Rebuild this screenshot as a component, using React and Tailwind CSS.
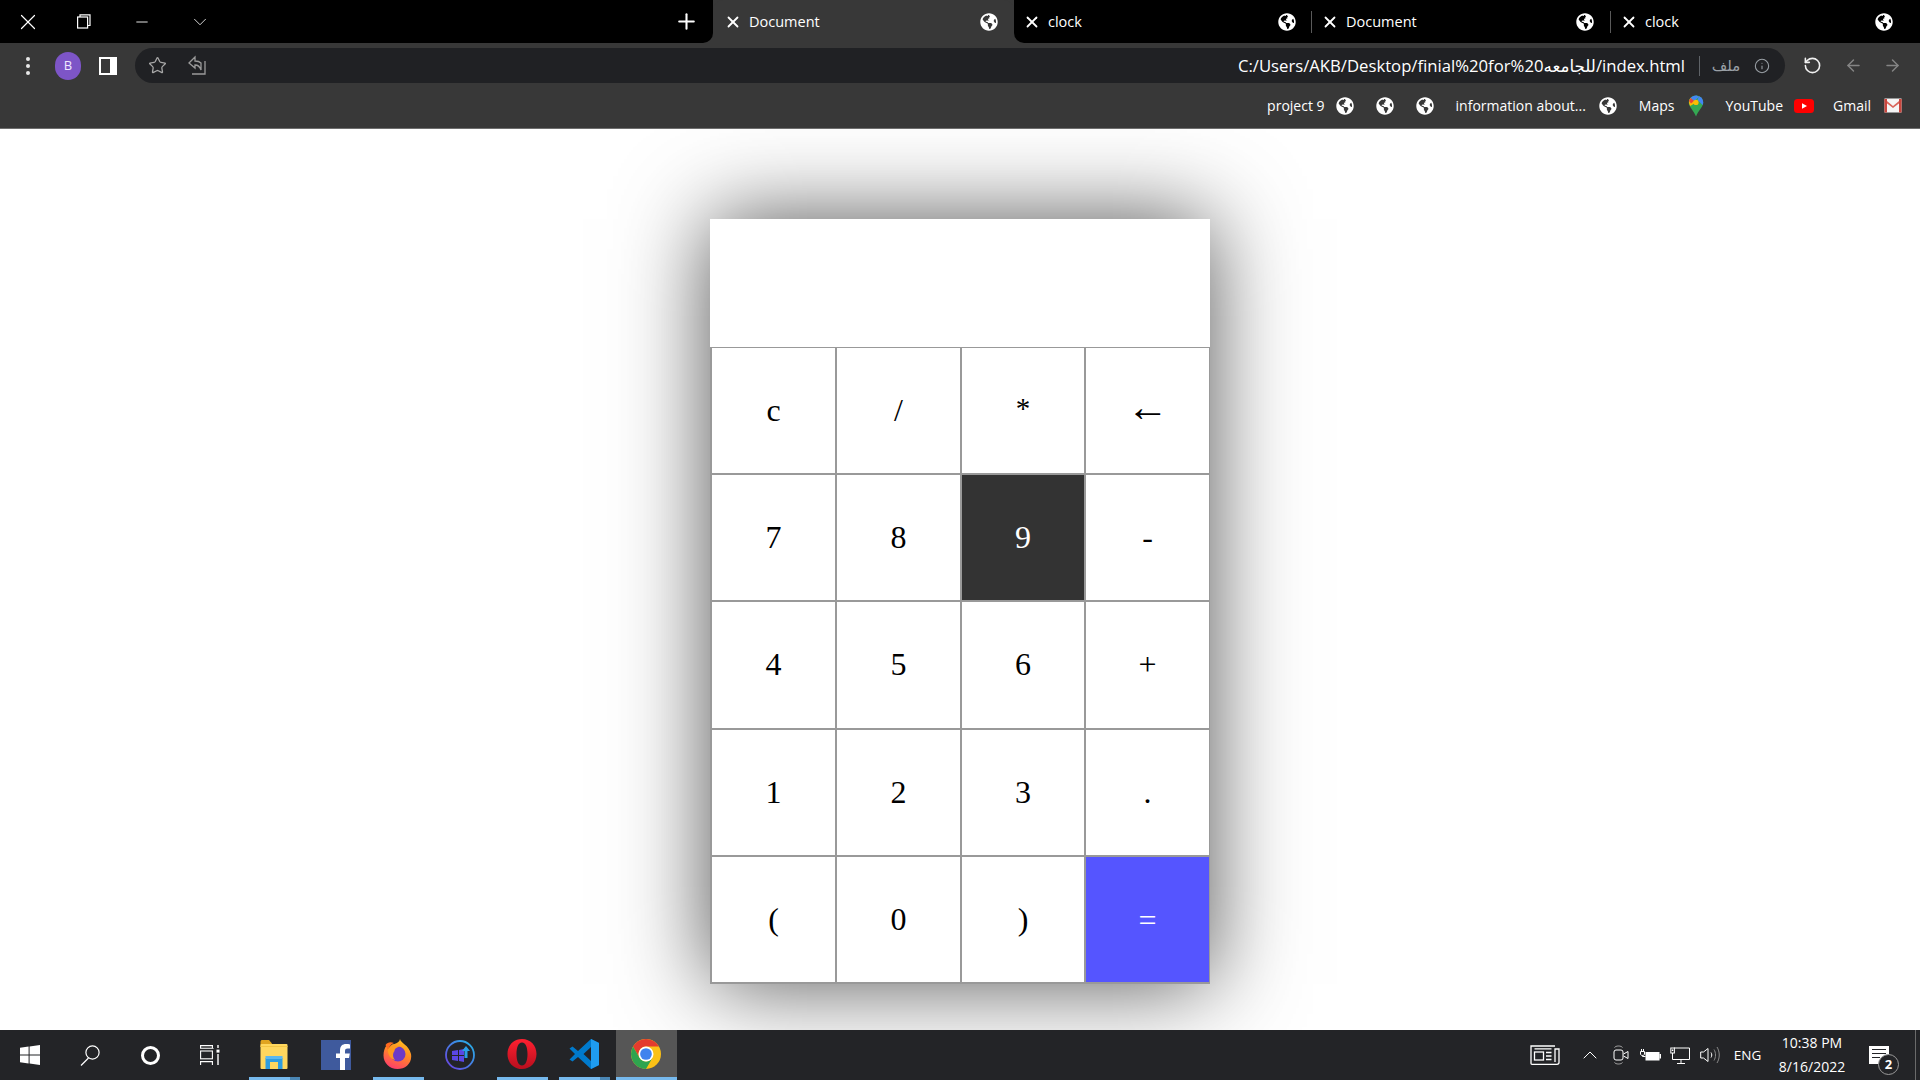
import React from "react";
import { X, Plus, Minus, ChevronDown, ChevronUp, Star, RotateCw, ArrowLeft, ArrowRight, Info } from "lucide-react";
import { FaGlobeAmericas } from "react-icons/fa";

const Globe = ({ size = 18 }) => <FaGlobeAmericas size={size} className="text-white shrink-0" />;

function Tab({ title, active, wClass, plClass, prClass }) {
  return (
    <div className={`flex items-center h-full ${wClass} ${plClass} ${prClass} ${active ? "bg-[#383838] rounded-t-[10px]" : ""}`}>
      <X size={18} strokeWidth={2.4} className="text-white shrink-0" />
      <span className="ml-[7px] text-[14.5px] text-white">{title}</span>
      <span className="ml-auto"><Globe /></span>
    </div>
  );
}

const RestoreIcon = () => (
  <svg width="14" height="15" viewBox="0 0 14 15" fill="none" stroke="white" strokeWidth="1.2">
    <rect x="0.6" y="3" width="10" height="11" />
    <path d="M3 3V0.8H13V11.5H11" />
  </svg>
);

const ShareIcon = () => (
  <svg width="20" height="22" viewBox="0 0 20 22" fill="none" stroke="#9a9a9a" strokeWidth="1.3">
    <path d="M8 2 L2 8 L8 13 V10 C11 10 13 12 14 15 V8 C12 6 10 6 8 6 Z" />
    <path d="M18 6 V19 H5" />
  </svg>
);

const MapsPin = () => (
  <svg width="16" height="22" viewBox="0 0 16 22">
    <path d="M8 0.5 C3.8 0.5 0.8 3.6 0.8 7.5 C0.8 12 5.5 15 8 21.5 Z" fill="#34a853" />
    <path d="M8 0.5 C12.2 0.5 15.2 3.6 15.2 7.5 C15.2 12 10.5 15 8 21.5 Z" fill="#34a853" />
    <path d="M2.6 3 L8 7.5 L2.2 11 C0.4 8 0.6 5 2.6 3Z" fill="#fbbc04" />
    <path d="M8 0.5 C5.8 0.5 3.9 1.4 2.6 3 L6 6 L11 2 C10.2 1 9.2 0.5 8 0.5Z" fill="#4285f4" />
    <path d="M11 1.2 C13.6 2 15.2 4.6 15.2 7.5 C15.2 8.4 15 9.2 14.6 10 L9.5 5 Z" fill="#4285f4" />
    <path d="M2.6 3 L6 6 L3 8.5 L1 6 Z" fill="#ea4335" />
    <circle cx="8" cy="7.4" r="2.6" fill="#fbbc04" />
  </svg>
);

const YouTubeIcon = () => (
  <svg width="20" height="14" viewBox="0 0 20 14">
    <rect width="20" height="14" rx="3.5" fill="#f00" />
    <path d="M8 4.2 L13 7 L8 9.8 Z" fill="#fff" />
  </svg>
);

const GmailIcon = () => (
  <svg width="18" height="15" viewBox="0 0 18 15">
    <rect x="0.5" y="0.5" width="17" height="14" fill="#f5f5f5" />
    <path d="M0.5 1 L9 8 L17.5 1 V3.5 L9 10 L0.5 3.5 Z" fill="#d9645a" />
    <path d="M0.5 1 H3 V14.5 H0.5 Z M15 1 H17.5 V14.5 H15 Z" fill="#c9463e" />
  </svg>
);

const WinLogo = () => (
  <svg width="20" height="20" viewBox="0 0 20 20" fill="white">
    <path d="M0 2.8 L8.6 1.6 V9.4 H0 Z M9.6 1.5 L20 0 V9.4 H9.6 Z M0 10.5 H8.6 V18.4 L0 17.2 Z M9.6 10.5 H20 V20 L9.6 18.5 Z" />
  </svg>
);

const SearchIcon = () => (
  <svg width="20" height="21" viewBox="0 0 20 21" fill="none" stroke="white" strokeWidth="1.2">
    <circle cx="12.5" cy="7.5" r="6.6" />
    <path d="M8.5 13 L1 20.5" />
  </svg>
);

const TaskView = () => (
  <svg width="20" height="20" viewBox="0 0 20 20" fill="none" stroke="white" strokeWidth="1.1">
    <path d="M0 0.6 H13 M0 3.2 H13 V3" />
    <path d="M0.6 0 V3 M12.4 0 V3" />
    <rect x="0.6" y="6" width="11.8" height="7.8" />
    <path d="M0 16.6 H13 M0.6 16.6 V20 M12.4 16.6 V20" />
    <path d="M18 0 V3 M18 9 V20" strokeWidth="1.4" />
    <rect x="16.5" y="4.6" width="3" height="3" fill="white" stroke="none" />
  </svg>
);

const ExplorerIcon = () => (
  <svg width="28" height="30" viewBox="0 0 28 30">
    <path d="M0.5 3 C0.5 1.5 1.2 1 2.5 1 H9 L12 4.5 V8 H0.5 Z" fill="#e0a420" />
    <rect x="0.5" y="5" width="27" height="25" rx="1" fill="#ffd75e" />
    <path d="M0.5 8 H27.5 V7 H0.5 Z" fill="#f3c544" />
    <path d="M5.5 30 V19 H22.5 V30 H18 V23 H10 V30 Z" fill="#2f9ddf" />
    <rect x="5.5" y="17" width="17" height="3" fill="#5cb8ee" />
  </svg>
);

const FirefoxIcon = () => (
  <svg width="29" height="30" viewBox="0 0 29 30">
    <defs>
      <linearGradient id="ffa" x1="0.7" y1="0" x2="0.3" y2="1">
        <stop offset="0" stopColor="#ffc21f" />
        <stop offset="0.45" stopColor="#ff8a24" />
        <stop offset="1" stopColor="#ff3a6e" />
      </linearGradient>
    </defs>
    <path d="M17 0 C17.5 4 26 6 28 15 C29.5 24 22.5 30 14.5 30 C6.5 30 0.5 24 0.5 16.5 C0.5 12.5 1.5 9 3.5 6.5 C3.8 8 4.5 9 5.5 10 C6.5 7 9 5 11.5 5 C14 4 16.5 3 17 0Z" fill="url(#ffa)" />
    <path d="M2.5 6 C4.5 3.5 7 2.5 11 4 C8 5 5.5 8 5.5 12 Z" fill="#ff6a1f" />
    <circle cx="15" cy="15" r="7.5" fill="#6d3ac6" />
    <path d="M5 10 C8 6.5 13 6 17 8 C13.5 8 11.5 10 11.5 12 C9.5 14.5 9.5 18 12 21 C8 20.5 4 15 5 10Z" fill="#ff9a1f" />
  </svg>
);

const CircleApp = () => (
  <svg width="30" height="40" viewBox="0 0 30 40">
    <defs>
      <linearGradient id="cap" x1="1" y1="0" x2="0" y2="1">
        <stop offset="0" stopColor="#22b7e8" />
        <stop offset="1" stopColor="#6d3ee0" />
      </linearGradient>
    </defs>
    <circle cx="15" cy="20" r="14" fill="none" stroke="url(#cap)" strokeWidth="1.8" />
    <path d="M7 16 L13 15 V20 H7 Z M14 15 L19 14 V20 H14 Z M7 21 H13 V26 L7 25 Z M14 21 H19 V27 L14 26 Z" fill="#5a47e6" />
    <path d="M21 11 L25 16 H22.5 V23 H19.5 V16 H17 Z" fill="#2a9fe8" />
  </svg>
);

const OperaIcon = () => (
  <svg width="30" height="40" viewBox="0 0 30 40">
    <defs>
      <linearGradient id="opr" x1="0" y1="0" x2="0" y2="1">
        <stop offset="0" stopColor="#ff2030" />
        <stop offset="1" stopColor="#b80f1e" />
      </linearGradient>
    </defs>
    <path fillRule="evenodd" d="M15 5 C23.5 5 29.5 11.5 29.5 20 C29.5 28.5 23.5 35 15 35 C6.5 35 0.5 28.5 0.5 20 C0.5 11.5 6.5 5 15 5 Z M15 8.5 C11 8.5 9.5 14 9.5 20 C9.5 26 11 31.5 15 31.5 C19 31.5 20.5 26 20.5 20 C20.5 14 19 8.5 15 8.5 Z" fill="url(#opr)" />
  </svg>
);

const VSCodeIcon = () => (
  <svg width="30" height="40" viewBox="0 0 30 40">
    <path d="M22 5 L30 9 V31 L22 35 L9 23 L3.5 27.5 L0.5 25.5 L6 20 L0.5 14.5 L3.5 12.5 L9 17 Z M22 13 L14.5 20 L22 27 Z" fill="#007acc" fillRule="evenodd" />
    <path d="M22 5 L30 9 V31 L22 35 Z" fill="#1f9cf0" />
  </svg>
);

const ChromeIcon = () => (
  <svg width="30" height="30" viewBox="4 4 40 40">
    <circle cx="24" cy="24" r="20" fill="#fbc116" />
    <path d="M6.68 14 A20 20 0 0 1 41.32 14 H24 A10 10 0 0 0 15.34 29 Z" fill="#e33b2e" />
    <path d="M24 44 A20 20 0 0 1 6.68 14 L15.34 29 A10 10 0 0 0 32.66 29 Z" fill="#2ea44f" />
    <circle cx="24" cy="24" r="10" fill="#fff" />
    <circle cx="24" cy="24" r="7.8" fill="#3f83ee" />
  </svg>
);

const NewsIcon = () => (
  <svg width="30" height="20" viewBox="0 0 30 20" fill="none" stroke="white" strokeWidth="1.3">
    <path d="M25 1 H1 V18.5 C1 19 1.5 19.3 2 19.3 H27 C28 19.3 29 18.6 29 17.5 V4 H25 V17" />
    <rect x="4.5" y="7" width="9" height="8" />
    <path d="M4.5 3.8 H21.5 M16 7.5 H21.5 M16 11 H21.5 M16 14.5 H21.5" />
  </svg>
);

const CameraIcon = () => (
  <svg width="16" height="20" viewBox="0 0 16 20" fill="none" stroke="white" strokeWidth="1">
    <rect x="1" y="5" width="9" height="10" rx="2" />
    <path d="M10.5 9 L15 6.5 V13.5 L10.5 11" />
    <path d="M1.5 2.5 C3 0.5 8 0.5 9.5 2.5 M1.5 17.5 C3 19.5 8 19.5 9.5 17.5" stroke="#aaa" />
  </svg>
);

const BatteryIcon = () => (
  <svg width="21" height="12" viewBox="0 0 21 12" fill="none">
    <rect x="5.5" y="3" width="14" height="8.5" fill="white" />
    <rect x="19.5" y="5" width="1.5" height="4.5" fill="white" />
    <path d="M1.5 0 V2.5 M3.5 0 V2.5 M0.5 2.5 H4.5 V5 C4.5 6 3.5 6.5 2.5 6.5 C1.5 6.5 0.5 6 0.5 5 Z M2.5 6.5 V7.5 H5.5" stroke="white" strokeWidth="1" />
  </svg>
);

const NetworkIcon = () => (
  <svg width="20" height="17" viewBox="0 0 20 17" fill="none" stroke="white" strokeWidth="1">
    <path d="M4 1 H19.5 V12.5 H2.5 V6" />
    <path d="M11 12.5 V16 M7 16.5 H15" />
    <rect x="0.8" y="1" width="3.6" height="5" fill="#232427" />
    <rect x="1.8" y="2.5" width="1.5" height="1.5" fill="white" stroke="none" />
  </svg>
);

const SpeakerIcon = () => (
  <svg width="20" height="18" viewBox="0 0 20 18" fill="none" stroke="white" strokeWidth="1">
    <path d="M0.7 6 H3.5 L8 2.5 V15.5 L3.5 12 H0.7 Z" />
    <path d="M11 6.5 C12 8 12 10 11 11.5" />
    <path d="M14 3.5 C16 6.5 16 11.5 14 14.5 M17 1 C20 6 20 12 17 17" stroke="#8a8a8a" />
  </svg>
);

const NotifIcon = () => (
  <div className="relative w-[20px] h-[18px] bg-white flex flex-col gap-[3px] px-[3px] pt-[3px]">
    <div className="h-[1px] bg-[#232427]" />
    <div className="h-[1px] bg-[#232427]" />
    <div className="h-[1px] w-[8px] bg-[#232427]" />
    <div className="absolute left-[9px] top-[8px] w-[21px] h-[21px] rounded-full border border-[#9a9a9a] bg-[#232427] text-white text-[13px] font-bold flex items-center justify-center leading-none">2</div>
  </div>
);

function TaskSlot({ wClass, tone, split, children }) {
  return (
    <div className={`flex flex-col h-full ${wClass} ${tone === "active" ? "bg-[#565656]" : ""}`}>
      <div className="flex-1 flex items-center justify-center min-h-0 pr-[2px]">{children}</div>
      {tone ? (
        <div className="flex h-[3px] shrink-0">
          <div className="flex-1 bg-[#76b9ed]" />
          {split ? <div className="w-[10px] bg-[#4a86b4]" /> : null}
        </div>
      ) : null}
    </div>
  );
}

const keys = [
  ["c", "/", "*", "←"],
  ["7", "8", "9", "-"],
  ["4", "5", "6", "+"],
  ["1", "2", "3", "."],
  ["(", "0", ")", "="],
];

function keyClass(k) {
  if (k === "9") return "bg-[#333333] text-white text-[32px] pb-[2px]";
  if (k === "=") return "bg-[#5555ff] text-white text-[32px]";
  if (k === "←") return "bg-white text-black text-[42px] pb-[6px]";
  if (k === "*") return "bg-white text-black text-[29px] pb-[4px]";
  return "bg-white text-black text-[32px] pb-[2px]";
}

export default function App() {
  return (
    <div className="w-[1920px] h-[1080px] overflow-hidden flex flex-col bg-white font-['Open_Sans','DejaVu_Sans',sans-serif]">
      {/* tab strip */}
      <div className="h-[43px] shrink-0 flex bg-[#383838]">
        <div className="w-[713px] h-full bg-black rounded-br-[10px] flex items-center">
          <div className="w-[56px] flex justify-center"><X size={26} strokeWidth={1.1} className="text-white" /></div>
          <div className="w-[56px] flex justify-center"><RestoreIcon /></div>
          <div className="w-[60px] flex justify-center"><Minus size={18} strokeWidth={1.2} className="text-white" /></div>
          <div className="w-[56px] flex justify-center"><ChevronDown size={22} strokeWidth={0.9} className="text-white" /></div>
          <div className="ml-[442px] w-[32px] flex justify-center"><Plus size={25} strokeWidth={2} className="text-white" /></div>
        </div>
        <Tab title="Document" active wClass="w-[301px]" plClass="pl-[11px]" prClass="pr-[16px]" />
        <div className="flex-1 h-full bg-black rounded-bl-[10px] flex items-center">
          <Tab title="clock" wClass="w-[297px]" plClass="pl-[9px]" prClass="pr-[15px]" />
          <div className="w-[1px] h-[22px] bg-[#5a5a5a]" />
          <Tab title="Document" wClass="w-[298px]" plClass="pl-[9px]" prClass="pr-[16px]" />
          <div className="w-[1px] h-[22px] bg-[#5a5a5a]" />
          <Tab title="clock" wClass="w-[297px]" plClass="pl-[9px]" prClass="pr-[15px]" />
        </div>
      </div>

      {/* toolbar */}
      <div className="shrink-0 bg-[#383838] pt-[5px]">
        <div className="h-[35px] flex items-center">
          <div className="w-[55px] flex justify-center text-white">
            <div className="flex flex-col gap-[3px]">
              <div className="w-[4px] h-[4px] rounded-full bg-[#e8e8e8]" />
              <div className="w-[4px] h-[4px] rounded-full bg-[#e8e8e8]" />
              <div className="w-[4px] h-[4px] rounded-full bg-[#e8e8e8]" />
            </div>
          </div>
          <div className="w-[26px] h-[28px] rounded-full bg-[#7d55c7] text-[#efe8ff] text-[13px] flex items-center justify-center">B</div>
          <div className="w-[54px] flex justify-center">
            <div className="w-[18px] h-[18px] bg-white flex justify-start p-[2px]"><div className="w-[9px] h-full bg-[#383838]" /></div>
          </div>
          <div className="w-[1650px] h-full rounded-full bg-[#202124] flex items-center">
            <div className="w-[44px] flex justify-center"><Star size={19} strokeWidth={1.6} className="text-[#a8a8a8]" /></div>
            <div className="w-[36px] flex justify-center"><ShareIcon /></div>
            <div className="flex-1 flex justify-end text-[16.7px] text-white whitespace-nowrap" dir="ltr">
              C:/Users/AKB/Desktop/finial%20for%20للجامعه/index.html
            </div>
            <div className="ml-[14px] w-[1px] h-[20px] bg-[#5f6368]" />
            <div className="ml-[10px] w-[32px] text-[15px] text-[#9aa0a6] whitespace-nowrap text-center">ملف</div>
            <div className="ml-[12px] flex justify-center"><Info size={16} strokeWidth={1.6} className="text-[#9aa0a6]" /></div>
            <div className="w-[15px]" />
          </div>
          <div className="w-[54px] flex justify-center"><RotateCw size={19} strokeWidth={2} className="text-[#f0f0f0] -scale-x-100" /></div>
          <div className="w-[28px] flex justify-center"><ArrowLeft size={19} strokeWidth={1.8} className="text-[#858585]" /></div>
          <div className="w-[50px] flex justify-center"><ArrowRight size={19} strokeWidth={1.8} className="text-[#858585]" /></div>
        </div>
        {/* bookmarks */}
        <div className="h-[45px] flex items-center justify-end text-[14px] text-white whitespace-nowrap">
          <span>project 9</span>
          <span className="ml-[11px]"><Globe /></span>
          <span className="ml-[22px]"><Globe /></span>
          <span className="ml-[22px]"><Globe /></span>
          <span className="ml-[22px]">information about...</span>
          <span className="ml-[13px]"><Globe /></span>
          <span className="ml-[22px]">Maps</span>
          <span className="ml-[14px] flex"><MapsPin /></span>
          <span className="ml-[21px]">YouTube</span>
          <span className="ml-[11px] flex"><YouTubeIcon /></span>
          <span className="ml-[19px]">Gmail</span>
          <span className="ml-[13px] mr-[18px] flex"><GmailIcon /></span>
        </div>
        <div className="h-[1px] bg-[#6e6e6e]" />
      </div>

      {/* page */}
      <div className="flex-1 min-h-0 bg-white overflow-hidden flex justify-center pt-[90px]">
        <div className="w-[500px] h-[765px] shrink-0 shadow-[0_0_85px_rgba(0,0,0,0.68)] flex flex-col font-['Liberation_Serif',serif]">
          <div className="h-[128px] bg-white" />
          <div className="grid grid-cols-[123px_123px_122px_123px] grid-rows-[125px_125px_126px_125px_125px] gap-[2px] bg-[#999999] pt-[1px] pl-[2px] pr-[1px] pb-[2px]">
            {keys.flat().map((k) => (
              <button
                key={k}
                className={`flex items-center justify-center font-['Liberation_Serif',serif] ${keyClass(k)}`}
              >
                {k}
              </button>
            ))}
          </div>
        </div>
      </div>

      {/* taskbar */}
      <div className="h-[50px] shrink-0 bg-[#232427] flex items-stretch relative">
        <div className="w-[60px] flex items-center justify-center"><WinLogo /></div>
        <div className="w-[60px] flex items-center justify-center"><SearchIcon /></div>
        <div className="w-[60px] flex items-center justify-center"><div className="w-[19px] h-[19px] rounded-full border-[3px] border-white" /></div>
        <div className="w-[60px] flex items-center justify-center"><TaskView /></div>
        <div className="ml-[9px] flex h-full gap-[11px]">
          <TaskSlot wClass="w-[51px]" tone="open" split><ExplorerIcon /></TaskSlot>
          <TaskSlot wClass="w-[51px]">
            <div className="w-[30px] h-[30px] bg-[#3f5a9d] flex items-end justify-end overflow-hidden">
              <svg width="16" height="27" viewBox="0 0 16 27"><path d="M5 27 V15 H1 V10.5 H5 V7.5 C5 3 7.5 1 11 1 C12.5 1 14 1.2 15 1.4 V5.5 H12.5 C10.8 5.5 10 6.3 10 8 V10.5 H14.8 L14 15 H10 V27 Z" fill="white" /></svg>
            </div>
          </TaskSlot>
          <TaskSlot wClass="w-[51px]" tone="open"><FirefoxIcon /></TaskSlot>
          <TaskSlot wClass="w-[51px]"><CircleApp /></TaskSlot>
          <TaskSlot wClass="w-[51px]" tone="open"><OperaIcon /></TaskSlot>
          <TaskSlot wClass="w-[51px]" tone="open" split><VSCodeIcon /></TaskSlot>
          <div className="-ml-[5px]"><TaskSlot wClass="w-[61px]" tone="active"><ChromeIcon /></TaskSlot></div>
        </div>
        <div className="flex-1" />
        <div className="w-[30px] flex items-center justify-center"><NewsIcon /></div>
        <div className="ml-[15px] w-[30px] flex items-center justify-center"><ChevronUp size={24} strokeWidth={1} className="text-white" /></div>
        <div className="ml-[1px] w-[30px] flex items-center justify-center"><CameraIcon /></div>
        <div className="w-[29px] flex items-center justify-center"><BatteryIcon /></div>
        <div className="w-[30px] flex items-center justify-center"><NetworkIcon /></div>
        <div className="w-[30px] flex items-center justify-center"><SpeakerIcon /></div>
        <div className="ml-[8px] w-[29px] flex items-center justify-center text-[13.5px] text-white">ENG</div>
        <div className="ml-[8px] w-[84px] flex flex-col items-center justify-center text-[14px] text-white leading-[24px] whitespace-nowrap">
          <span>10:38 PM</span>
          <span>8/16/2022</span>
        </div>
        <div className="w-[50px] flex items-center justify-center"><NotifIcon /></div>
        <div className="ml-[11px] w-[1px] bg-[#6a6a6a]" />
        <div className="w-[4px]" />
      </div>
    </div>
  );
}
